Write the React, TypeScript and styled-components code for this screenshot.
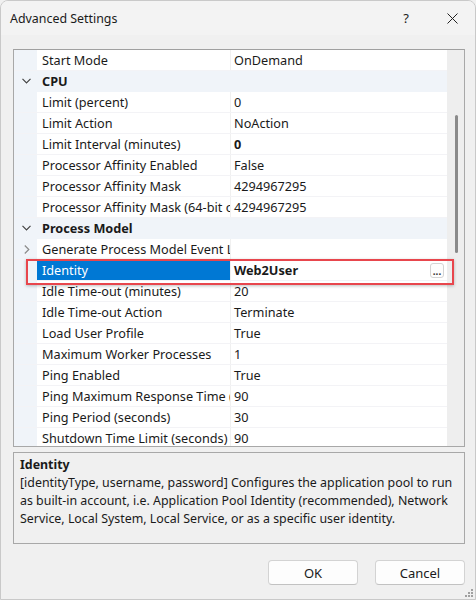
import React from "react";
import styled, { createGlobalStyle } from "styled-components";

const GlobalStyle = createGlobalStyle`
  html, body {
    margin: 0;
    padding: 0;
    background: #f0f0f0;
  }
  body {
    font-family: "Noto Sans", "Open Sans", sans-serif;
    font-size: 12px;
    color: #1a1a1a;
  }
`;

const Window = styled.div`
  position: relative;
  width: 476px;
  height: 600px;
  box-sizing: border-box;
  border: 1px solid #c9c9c9;
  border-radius: 8px 8px 0 0;
  background: #f0f0f0;
  display: flex;
  flex-direction: column;
  overflow: hidden;
`;

const TitleBar = styled.div`
  height: 34px;
  display: flex;
  align-items: center;
  padding-left: 9px;
  background: #f3f3f3;
`;

const Title = styled.div`
  flex: 1;
  font-size: 12.4px;
`;

const TitleButton = styled.div<{ w: number }>`
  width: ${({ w }) => w}px;
  height: 34px;
  display: flex;
  align-items: center;
  justify-content: center;
  font-size: 13px;
`;

const Body = styled.div`
  flex: 1;
  display: flex;
  flex-direction: column;
  padding: 14px 10px 0 12px;
`;

const Grid = styled.div`
  position: relative;
  height: 398px;
  box-sizing: border-box;
  border: 1px solid #a8a8a8;
  border-top-color: #a0a0a0;
  display: flex;
  background: #fff;
  font-size: 12.7px;
`;

const Rows = styled.div`
  flex: 1;
  overflow: hidden;
`;

const Row = styled.div<{ category?: boolean }>`
  height: 21px;
  box-sizing: border-box;
  display: grid;
  grid-template-columns: 23px 194px 1fr;
  align-items: stretch;
  background: ${({ category }) => (category ? "#f0f4f9" : "#fff")};
  border-bottom: 1px solid ${({ category }) => (category ? "#f0f4f9" : "#f3f3f6")};
`;

const Gutter = styled.div`
  background: #f0f4f9;
  display: flex;
  align-items: center;
  justify-content: center;
  padding-left: 2px;
`;

const NameCell = styled.div<{ selected?: boolean; bold?: boolean; span?: boolean }>`
  display: flex;
  align-items: center;
  padding-left: 5px;
  white-space: nowrap;
  overflow: hidden;
  text-overflow: clip;
  font-weight: ${({ bold }) => (bold ? 700 : 400)};
  background: ${({ selected }) => (selected ? "#0078d4" : "transparent")};
  color: ${({ selected }) => (selected ? "#fff" : "#1a1a1a")};
  border-right: 1px solid ${({ span }) => (span ? "transparent" : "#f0f0f0")};
`;

const ValueCell = styled.div<{ bold?: boolean }>`
  display: flex;
  align-items: center;
  padding-left: 3px;
  padding-right: 3px;
  white-space: nowrap;
  overflow: hidden;
  font-weight: ${({ bold }) => (bold ? 700 : 400)};
`;

const ValueText = styled.span`
  flex: 1;
`;

const EllipsisButton = styled.div`
  width: 14px;
  height: 15px;
  box-sizing: border-box;
  border: 1px solid #d4d4d4;
  border-radius: 3px;
  background: #fdfdfd;
  display: flex;
  align-items: flex-end;
  justify-content: center;
  font-size: 10px;
  line-height: 11px;
  font-weight: 700;
  color: #333;
`;

const Scrollbar = styled.div`
  width: 17px;
  background: #eeeeee;
  position: relative;
`;

const Thumb = styled.div`
  position: absolute;
  left: 8px;
  top: 65px;
  width: 3px;
  height: 138px;
  border-radius: 2px;
  background: #8a8a8a;
`;

const Highlight = styled.div`
  position: absolute;
  left: 12px;
  top: 209px;
  width: 428px;
  height: 26px;
  box-sizing: border-box;
  border: 2px solid #e8464d;
  box-shadow: 0 1px 3px rgba(0, 0, 0, 0.25);
  pointer-events: none;
`;

const Description = styled.div`
  margin-top: 5px;
  height: 92px;
  box-sizing: border-box;
  border: 1px solid #a8a8a8;
  background: #f0f0f0;
  padding: 2px 6px;
  font-size: 12.4px;
`;

const DescTitle = styled.div`
  font-weight: 700;
  line-height: 19px;
`;

const DescText = styled.div`
  line-height: 18px;
`;

const Footer = styled.div`
  display: flex;
  justify-content: flex-end;
  gap: 17px;
  margin-top: 16px;
`;

const Button = styled.div`
  width: 90px;
  height: 25px;
  box-sizing: border-box;
  border: 1px solid #d3d3d3;
  border-bottom-color: #c2c2c2;
  border-radius: 4px;
  background: #fdfdfd;
  display: flex;
  align-items: center;
  justify-content: center;
  font-size: 13px;
`;

const Grip = styled.svg`
  position: absolute;
  right: 1px;
  bottom: 1px;
`;

const ChevronDown = () => (
  <svg width="9" height="6" viewBox="0 0 9 6">
    <polyline points="0.5,0.8 4.5,4.8 8.5,0.8" fill="none" stroke="#444" strokeWidth="1.2" />
  </svg>
);

const ChevronRight = () => (
  <svg width="6" height="9" viewBox="0 0 6 9">
    <polyline points="0.8,0.5 4.8,4.5 0.8,8.5" fill="none" stroke="#8a8a8a" strokeWidth="1.2" />
  </svg>
);

type Item = {
  name: string;
  value?: string;
  category?: boolean;
  expandable?: boolean;
  boldValue?: boolean;
  selected?: boolean;
};

const items: Item[] = [
  { name: "Start Mode", value: "OnDemand" },
  { name: "CPU", category: true },
  { name: "Limit (percent)", value: "0" },
  { name: "Limit Action", value: "NoAction" },
  { name: "Limit Interval (minutes)", value: "0", boldValue: true },
  { name: "Processor Affinity Enabled", value: "False" },
  { name: "Processor Affinity Mask", value: "4294967295" },
  { name: "Processor Affinity Mask (64-bit option)", value: "4294967295" },
  { name: "Process Model", category: true },
  { name: "Generate Process Model Event Log Entry", value: "", expandable: true },
  { name: "Identity", value: "Web2User", boldValue: true, selected: true },
  { name: "Idle Time-out (minutes)", value: "20" },
  { name: "Idle Time-out Action", value: "Terminate" },
  { name: "Load User Profile", value: "True" },
  { name: "Maximum Worker Processes", value: "1" },
  { name: "Ping Enabled", value: "True" },
  { name: "Ping Maximum Response Time (seconds)", value: "90" },
  { name: "Ping Period (seconds)", value: "30" },
  { name: "Shutdown Time Limit (seconds)", value: "90" },
];

export default function App() {
  return (
    <Window>
      <GlobalStyle />
      <TitleBar>
        <Title>Advanced Settings</Title>
        <TitleButton w={46}>?</TitleButton>
        <TitleButton w={46}>
          <svg width="11" height="11" viewBox="0 0 11 11">
            <path d="M0.5 0.5 L10.5 10.5 M10.5 0.5 L0.5 10.5" stroke="#222" strokeWidth="1" />
          </svg>
        </TitleButton>
      </TitleBar>
      <Body>
        <Grid>
          <Rows>
            {items.map((it) =>
              it.category ? (
                <Row key={it.name} category>
                  <Gutter>
                    <ChevronDown />
                  </Gutter>
                  <NameCell bold span>
                    {it.name}
                  </NameCell>
                  <ValueCell />
                </Row>
              ) : (
                <Row key={it.name}>
                  <Gutter>{it.expandable && <ChevronRight />}</Gutter>
                  <NameCell selected={it.selected}>{it.name}</NameCell>
                  <ValueCell bold={it.boldValue}>
                    <ValueText>{it.value}</ValueText>
                    {it.selected && <EllipsisButton>...</EllipsisButton>}
                  </ValueCell>
                </Row>
              )
            )}
          </Rows>
          <Scrollbar>
            <Thumb />
          </Scrollbar>
          <Highlight />
        </Grid>
        <Description>
          <DescTitle>Identity</DescTitle>
          <DescText>
            [identityType, username, password] Configures the application pool to run
            <br />
            as built-in account, i.e. Application Pool Identity (recommended), Network
            <br />
            Service, Local System, Local Service, or as a specific user identity.
          </DescText>
        </Description>
        <Footer>
          <Button>OK</Button>
          <Button>Cancel</Button>
        </Footer>
      </Body>
      <Grip width="10" height="10" viewBox="0 0 10 10">
        <rect x="7" y="1" width="2" height="2" fill="#a0a0a0" />
        <rect x="4" y="4" width="2" height="2" fill="#a0a0a0" />
        <rect x="7" y="4" width="2" height="2" fill="#a0a0a0" />
        <rect x="1" y="7" width="2" height="2" fill="#a0a0a0" />
        <rect x="4" y="7" width="2" height="2" fill="#a0a0a0" />
        <rect x="7" y="7" width="2" height="2" fill="#a0a0a0" />
      </Grip>
    </Window>
  );
}
